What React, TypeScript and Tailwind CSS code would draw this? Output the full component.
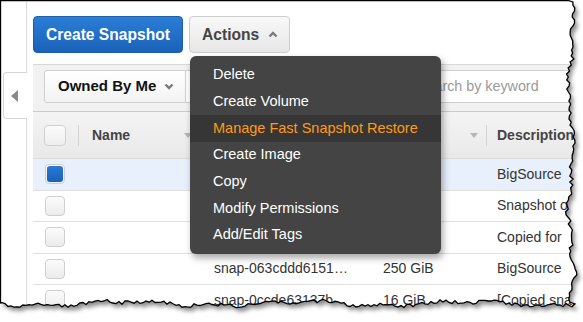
import React from "react";

// deterministic jitter for the torn paper edge
function rnd(i: number) {
  const x = Math.sin(i * 127.1 + 311.7) * 43758.5453;
  return x - Math.floor(x);
}

function buildEdge() {
  const pts: string[] = ["M0.5 0.5", "L568 0.5"];
  for (let y = 2; y <= 302; y += 3) {
    const x = 571 + 2.5 * Math.sin(y / 19) + 1.5 * Math.sin(y / 7) + (rnd(y) - 0.5) * 4;
    pts.push(`L${x.toFixed(1)} ${y}`);
  }
  pts.push("L575 304");
  for (let x = 572; x >= 0; x -= 3) {
    const y = 303.5 + 2 * Math.sin(x / 27) + 1.2 * Math.sin(x / 9) + (rnd(x + 1000) - 0.5) * 3.5;
    pts.push(`L${x} ${y.toFixed(1)}`);
  }
  pts.push("L0.5 303 Z");
  return pts.join(" ");
}

function TornEdge() {
  const p = buildEdge();
  const outside = "M0 0H583V322H0Z " + p;
  return (
    <svg className="pointer-events-none absolute inset-0" width="583" height="322" viewBox="0 0 583 322">
      <defs>
        <clipPath id="outside">
          <path d={outside} clipRule="evenodd" />
        </clipPath>
        <filter id="blur" x="-5%" y="-5%" width="110%" height="110%">
          <feGaussianBlur stdDeviation="2.2" />
        </filter>
      </defs>
      <path d={outside} fill="#fff" fillRule="evenodd" />
      <g clipPath="url(#outside)">
        <path d={p} transform="translate(3 4)" fill="#666" opacity="0.75" filter="url(#blur)" />
      </g>
      <path d={p} fill="none" stroke="#000" strokeWidth="1.3" />
    </svg>
  );
}

function Chevron({ up = false }: { up?: boolean }) {
  return (
    <svg width="10" height="7" viewBox="0 0 10 7">
      <polyline
        points={up ? "1.5,5.5 5,2 8.5,5.5" : "1.5,1.5 5,5 8.5,1.5"}
        fill="none"
        stroke="#7a7a7a"
        strokeWidth="2.4"
      />
    </svg>
  );
}

function SortArrow() {
  return (
    <svg width="8" height="5" viewBox="0 0 8 5">
      <polygon points="0,0 8,0 4,5" fill="#b5b5b5" />
    </svg>
  );
}

function Checkbox({ checked = false }: { checked?: boolean }) {
  return (
    <div className="flex h-[20px] w-[20px] items-center justify-center rounded-[4px] border border-[#cfcfcf] bg-gradient-to-b from-[#fbfbfb] to-[#ececec]">
      {checked && <div className="h-[16px] w-[16px] rounded-[3px] bg-gradient-to-b from-[#2a7ad6] to-[#1a60b8]" />}
    </div>
  );
}

// id/size of the first rows sit under the open menu, so they are left blank
const rows = [
  { key: "r1", id: "", size: "", desc: "BigSource", selected: true },
  { key: "r2", id: "", size: "", desc: "Snapshot of", selected: false },
  { key: "r3", id: "", size: "", desc: "Copied for", selected: false },
  { key: "r4", id: "snap-063cddd6151…", size: "250 GiB", desc: "BigSource", selected: false },
  { key: "r5", id: "snap-0ccde63137b…", size: "16 GiB", desc: "[Copied snap", selected: false },
];

const menuItems = [
  "Delete",
  "Create Volume",
  "Manage Fast Snapshot Restore",
  "Create Image",
  "Copy",
  "Modify Permissions",
  "Add/Edit Tags",
];

export default function App() {
  return (
    <div className="relative h-[322px] w-[583px] overflow-hidden bg-white font-['Liberation_Sans',Arial,sans-serif]">
      <div className="flex h-full">
        {/* Collapsed side panel */}
        <div className="flex w-[27px] shrink-0 flex-col">
          <div className="h-[72px] border-r border-[#dcdcdc]" />
          <div className="ml-[3px] flex h-[47px] items-center justify-center rounded-l-[4px] border-y border-l border-[#d6d6d6] bg-white pr-[2px]">
            <svg width="7" height="12" viewBox="0 0 7 12">
              <polygon points="7,0 7,12 0,6" fill="#8a8a8a" />
            </svg>
          </div>
          <div className="flex-1 border-r border-[#dcdcdc]" />
        </div>

        {/* Main area */}
        <div className="min-w-0 flex-1 pl-[6px] pt-[16px]">
          <div className="flex h-[37px] gap-[6px]">
            <button className="flex w-[150px] items-center rounded-[4px] border border-[#1b5eac] bg-gradient-to-b from-[#2b7dd6] to-[#1a62b9] pl-[12px] text-[15.6px] font-bold text-white">
              Create Snapshot
            </button>
            <button className="flex w-[101px] items-center gap-[9px] rounded-[4px] border border-[#cdcdcd] bg-gradient-to-b from-[#f8f8f8] to-[#e7e7e7] pl-[12px] text-[15.6px] font-bold text-[#444]">
              Actions
              <Chevron up />
            </button>
          </div>

          {/* Filter bar */}
          <div className="mt-[11px] flex w-[600px] border-y border-t-[#d8d8d8] border-b-[#cbcbcb] bg-[#f1f1f1] pb-[8px] pl-[11px] pt-[5px]">
            <div className="flex h-[33px] w-[142px] shrink-0 items-center justify-between rounded-l-[3px] border border-[#cfcfcf] bg-gradient-to-b from-white to-[#f3f3f3] pl-[13px] pr-[11px] text-[15px] font-bold text-[#111]">
              Owned By Me
              <Chevron />
            </div>
            <div className="flex h-[33px] w-[440px] shrink-0 items-center border-y border-r border-[#cfcfcf] bg-white pl-[231px] text-[14.3px] text-[#9a9a9a]">
              Search by keyword
            </div>
          </div>

          {/* Table */}
          <div className="w-[600px] text-[14px]">
            <div className="flex h-[47px] items-center border-b border-[#dcdcdc] bg-gradient-to-b from-[#f4f4f4] to-[#e9e9e9] font-bold text-[#444]">
              <div className="w-[45px] pl-[11px]">
                <div className="h-[21px] w-[22px] rounded-[4px] border border-[#d0d0d0] bg-gradient-to-b from-[#fbfbfb] to-[#eeeeee]" />
              </div>
              <div className="flex h-[21px] w-[122px] items-center justify-between border-l border-[#d4d4d4] pl-[13px] pr-[8px]">
                Name
                <SortArrow />
              </div>
              <div className="flex h-[21px] w-[170px] items-center justify-end border-l border-[#d4d4d4] pr-[8px]">
                <SortArrow />
              </div>
              <div className="flex h-[21px] w-[116px] items-center justify-end border-l border-[#d4d4d4] pr-[8px]">
                <SortArrow />
              </div>
              <div className="flex h-[21px] items-center border-l border-[#d4d4d4] pl-[10px]">Description</div>
            </div>
            {rows.map((r) => (
              <div
                key={r.key}
                className={`flex h-[31.5px] items-center border-b border-[#e0e0e0] text-[#333] ${r.selected ? "bg-[#e8f0fb]" : "bg-white"}`}
              >
                <div className="w-[45px] pl-[12px]">
                  <Checkbox checked={r.selected} />
                </div>
                <div className="w-[122px]" />
                <div className="w-[170px] pl-[14px]">{r.id}</div>
                <div className="w-[116px] pl-[13px]">{r.size}</div>
                <div className="pl-[11px]">{r.desc}</div>
              </div>
            ))}
          </div>
        </div>
      </div>

      {/* Actions dropdown menu */}
      <div className="absolute left-[190px] top-[56px] h-[198px] w-[251px] rounded-[6px] bg-[#444] pt-[6px] text-[14.5px] shadow-[2px_4px_7px_rgba(0,0,0,0.35)]">
        {menuItems.map((m) => (
          <div
            key={m}
            className={`flex h-[26.67px] items-center pl-[23px] ${m.startsWith("Manage") ? "bg-[#363636] text-[#ff9a1a]" : "text-white"}`}
          >
            {m}
          </div>
        ))}
      </div>

      <TornEdge />
    </div>
  );
}
